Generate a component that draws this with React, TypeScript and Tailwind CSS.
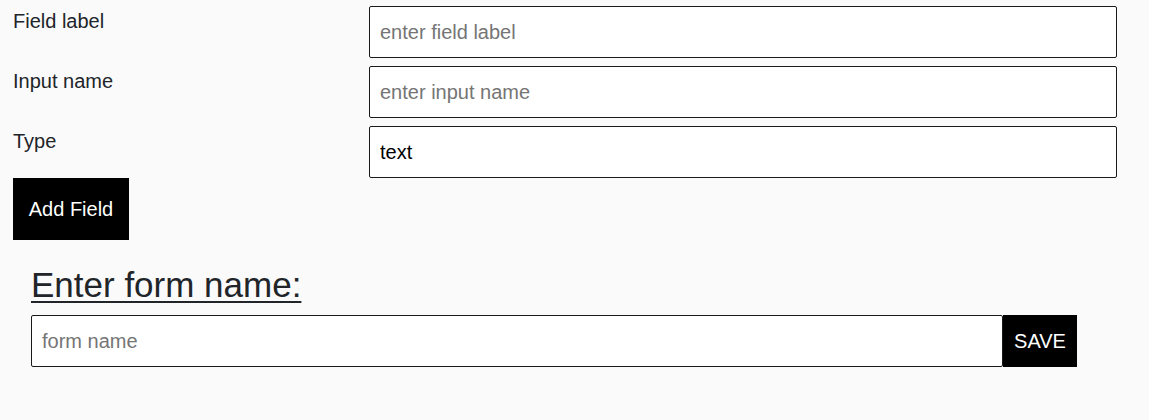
import { useState } from "react"

const font = { fontFamily: '"Liberation Sans", Arial, sans-serif' }

function FieldRow({ label, placeholder, value, onChange }: any) {
    return (
        <div className="flex items-start mb-2">
            <label className="w-[356px] shrink-0 pt-1 text-[20px] leading-[23px] text-[#212529]">{label}</label>
            <input
                type="text"
                value={value}
                onChange={(e) => onChange(e.target.value)}
                placeholder={placeholder}
                className="w-[748px] h-[52px] px-[10px] bg-white border border-[#1a1a1a] rounded-xs text-[20px] text-black placeholder:text-[#757575] outline-none"
            />
        </div>
    )
}

export default function App() {
    const [label, setLabel] = useState("")
    const [name, setName] = useState("")
    const [type, setType] = useState("text")
    const [formName, setFormName] = useState("")

    return (
        <div className="min-h-screen bg-[#fafafa]" style={font}>
            {/* Field builder */}
            <div className="pt-[6px] pl-[13px]">
                <FieldRow label="Field label" placeholder="enter field label" value={label} onChange={setLabel} />
                <FieldRow label="Input name" placeholder="enter input name" value={name} onChange={setName} />
                <div className="flex items-start">
                    <label className="w-[356px] shrink-0 pt-1 text-[20px] leading-[23px] text-[#212529]">Type</label>
                    <input
                        type="text"
                        value={type}
                        onChange={(e) => setType(e.target.value)}
                        className="w-[748px] h-[52px] px-[10px] bg-white border border-[#1a1a1a] rounded-xs text-[20px] text-black outline-none"
                    />
                </div>
                <button className="w-[116px] h-[62px] bg-black text-white text-[20px] leading-[23px]">Add Field</button>
            </div>

            {/* Form name */}
            <div className="pl-[31px] pt-6">
                <h2 className="text-[35px] leading-[42px] text-[#212529] underline underline-offset-[4px] decoration-2 mb-[9px]">Enter form name:</h2>
                <div className="flex">
                    <input
                        type="text"
                        value={formName}
                        onChange={(e) => setFormName(e.target.value)}
                        placeholder="form name"
                        className="w-[972px] h-[52px] px-[10px] bg-white border border-[#1a1a1a] rounded-xs text-[20px] text-black placeholder:text-[#757575] outline-none"
                    />
                    <button className="w-[74px] h-[52px] bg-black text-white text-[20px] leading-[23px]">SAVE</button>
                </div>
            </div>
        </div>
    )
}
